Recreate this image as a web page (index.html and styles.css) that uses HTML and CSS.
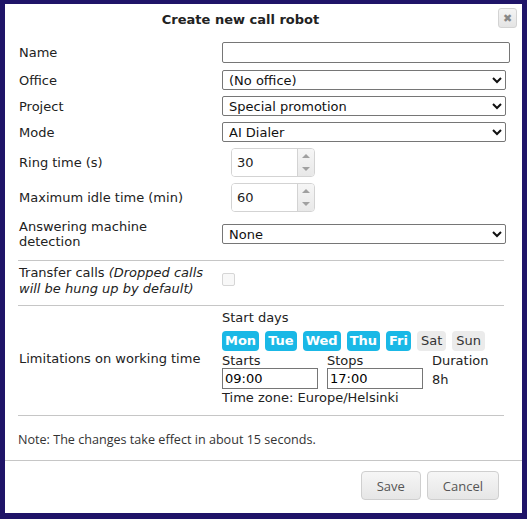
FILE: index.html
```html
<!DOCTYPE html>
<html lang="en">
<head>
    <meta charset="UTF-8">
    <meta name="viewport" content="width=device-width, initial-scale=1.0">
    <title>Create new call robot</title>
    <link rel="stylesheet" href="styles.css">
</head>
<body>
    <div class="dialog">
        <div class="dialog-header">
            <span class="dialog-title">Create new call robot</span>
            <button class="close-btn" type="button" title="Close">&#10006;</button>
        </div>
        <form class="dialog-body" id="robotForm">
            <div class="row row-name">
                <label for="name">Name</label>
                <input type="text" id="name" class="text-input wide">
            </div>
            <div class="row row-select">
                <label for="office">Office</label>
                <select id="office"><option>(No office)</option></select>
            </div>
            <div class="row row-select">
                <label for="project">Project</label>
                <select id="project"><option>Special promotion</option></select>
            </div>
            <div class="row row-select">
                <label for="mode">Mode</label>
                <select id="mode"><option>AI Dialer</option></select>
            </div>
            <div class="row row-spin">
                <label for="ring">Ring time (s)</label>
                <div class="spinner">
                    <input type="text" id="ring" value="30">
                    <span class="spin-btns">
                        <span class="spin-up"></span>
                        <span class="spin-down"></span>
                    </span>
                </div>
            </div>
            <div class="row row-spin">
                <label for="idle">Maximum idle time (min)</label>
                <div class="spinner">
                    <input type="text" id="idle" value="60">
                    <span class="spin-btns">
                        <span class="spin-up"></span>
                        <span class="spin-down"></span>
                    </span>
                </div>
            </div>
            <div class="row row-amd">
                <label for="amd">Answering machine detection</label>
                <select id="amd"><option>None</option></select>
            </div>
            <hr class="sep-amd">
            <div class="row row-transfer">
                <label for="transfer">Transfer calls <i>(Dropped calls will be hung up by default)</i></label>
                <input type="checkbox" id="transfer" class="check" disabled>
            </div>
            <hr class="sep-transfer">
            <div class="row row-hours">
                <label>Limitations on working time</label>
                <div class="hours">
                    <div class="hours-title">Start days</div>
                    <div class="days">
                        <span class="day on">Mon</span>
                        <span class="day on">Tue</span>
                        <span class="day on">Wed</span>
                        <span class="day on">Thu</span>
                        <span class="day on">Fri</span>
                        <span class="day">Sat</span>
                        <span class="day">Sun</span>
                    </div>
                    <div class="times">
                        <div class="time-col">
                            <span>Starts</span>
                            <input type="text" class="time-input" value="09:00">
                        </div>
                        <div class="time-col">
                            <span>Stops</span>
                            <input type="text" class="time-input" value="17:00">
                        </div>
                        <div class="time-col">
                            <span>Duration</span>
                            <span class="duration">8h</span>
                        </div>
                    </div>
                    <div class="timezone">Time zone: Europe/Helsinki</div>
                </div>
            </div>
            <hr class="sep-hours">
            <p class="note">Note: The changes take effect in about 15 seconds.</p>
        </form>
        <div class="dialog-footer">
            <button type="submit" form="robotForm" class="btn">Save</button>
            <button type="button" class="btn">Cancel</button>
        </div>
    </div>
    <script>
        document.querySelectorAll('.day').forEach(function(day) {
            day.addEventListener('click', function() {
                day.classList.toggle('on');
            });
        });
        document.getElementById('robotForm').addEventListener('submit', function(event) {
            event.preventDefault();
        });
    </script>
</body>
</html>
```

FILE: styles.css
```css
body {
    margin: 0;
    background-color: #1f1468;
    font-family: 'DejaVu Sans', Verdana, sans-serif;
    font-size: 13px;
    color: #222;
}
.dialog {
    margin: 4px 5px 6px 5px;
    height: 509px;
    background: #fff;
    display: flex;
    flex-direction: column;
}
.dialog-header {
    position: relative;
    height: 30px;
    display: flex;
    justify-content: center;
    align-items: center;
}
.dialog-title {
    font-weight: bold;
    font-size: 13px;
    color: #222;
    margin-left: -46px;
}
.close-btn {
    position: absolute;
    top: 4px;
    right: 5px;
    width: 19px;
    height: 20px;
    padding: 0;
    border: 1px solid #d3d3d3;
    border-radius: 3px;
    background: linear-gradient(#f4f4f4, #e4e4e4);
    color: #888;
    font-size: 11px;
    line-height: 18px;
}
.dialog-body {
    flex: 1;
    padding: 8px 13px 0 13px;
}
.row {
    display: grid;
    grid-template-columns: 204px 1fr;
    align-items: center;
}
.row label {
    padding-left: 1px;
}
.row-name {
    height: 21px;
    margin-bottom: 7px;
}
.text-input {
    box-sizing: border-box;
    height: 21px;
    border: 1px solid #767676;
    border-radius: 2px;
    font: inherit;
}
.wide {
    width: 288px;
}
select {
    box-sizing: border-box;
    width: 284px;
    height: 20px;
    border: 1px solid #767676;
    border-radius: 2px;
    background: #fff;
    font-family: 'DejaVu Sans', Verdana, sans-serif;
    font-size: 13px;
    color: #111;
    padding: 0 2px;
}
.row-select {
    height: 20px;
    margin-bottom: 6px;
}
.row-spin {
    height: 29px;
    margin-bottom: 6px;
}
.spinner {
    margin-left: 9px;
    box-sizing: border-box;
    width: 84px;
    height: 29px;
    display: flex;
    border: 1px solid #d3d3d3;
    border-radius: 4px;
    overflow: hidden;
}
.spinner input {
    width: 60px;
    border: none;
    padding: 0 0 0 5px;
    font: inherit;
    color: #222;
    outline: none;
}
.spin-btns {
    flex: 1;
    display: flex;
    flex-direction: column;
    border-left: 1px solid #d3d3d3;
    background: linear-gradient(#f6f6f6, #e8e8e8);
}
.spin-up,
.spin-down {
    flex: 1;
    display: flex;
    justify-content: center;
    align-items: center;
}
.spin-up::after {
    content: '';
    border-left: 4px solid transparent;
    border-right: 4px solid transparent;
    border-bottom: 4px solid #a0a0a0;
}
.spin-down::after {
    content: '';
    border-left: 4px solid transparent;
    border-right: 4px solid transparent;
    border-top: 4px solid #a0a0a0;
}
.row-amd {
    margin-top: 7px;
    line-height: 15px;
}
.row-amd label {
    padding-right: 40px;
}
hr {
    border: none;
    border-top: 1px solid #c6c6c6;
    margin: 0;
    width: 486px;
}
.sep-amd {
    margin-top: 11px;
}
.sep-transfer {
    margin-top: 8px;
}
.sep-hours {
    margin-top: 9px;
}
.row-transfer {
    line-height: 16px;
    padding-top: 4px;
    align-items: start;
}
.row-transfer label {
    padding-right: 6px;
}
.check {
    appearance: none;
    margin: 8px 0 0 0;
    width: 13px;
    height: 13px;
    border: 1px solid #d6d6d6;
    border-radius: 2px;
    background: #f8f8f8;
}
.row-hours {
    padding: 4px 0 0 0;
}
.hours {
    display: flex;
    flex-direction: column;
}
.hours-title {
    line-height: 16px;
}
.days {
    display: flex;
    gap: 6px;
    margin-top: 5px;
}
.day {
    height: 20px;
    line-height: 20px;
    padding: 0 4px;
    border-radius: 4px;
    background: #ebebeb;
    color: #333;
}
.day.on {
    padding: 0 3px;
    background: #1ab8e6;
    color: #fff;
    font-weight: bold;
}
.times {
    display: flex;
    margin-top: 2px;
}
.time-col {
    display: flex;
    flex-direction: column;
    width: 105px;
    line-height: 15px;
}
.time-input {
    box-sizing: border-box;
    width: 96px;
    height: 21px;
    border: 1px solid #767676;
    font: inherit;
    padding: 0 2px;
}
.duration {
    padding-top: 4px;
}
.timezone {
    line-height: 16px;
    margin-top: 1px;
}
.note {
    font-family: 'Open Sans', sans-serif;
    font-size: 12.6px;
    color: #333;
    margin: 15px 0 0 0;
}
.dialog-footer {
    border-top: 1px solid #c6c6c6;
    height: 53px;
    display: flex;
    justify-content: flex-end;
    gap: 6px;
    padding: 10px 23px 0 0;
    box-sizing: border-box;
}
.btn {
    height: 29px;
    padding: 0 15px;
    border: 1px solid #cfcfcf;
    border-radius: 4px;
    background: linear-gradient(#f6f6f6, #e6e6e6);
    font-family: 'Open Sans', sans-serif;
    font-size: 13px;
    color: #555;
    cursor: pointer;
}
```
